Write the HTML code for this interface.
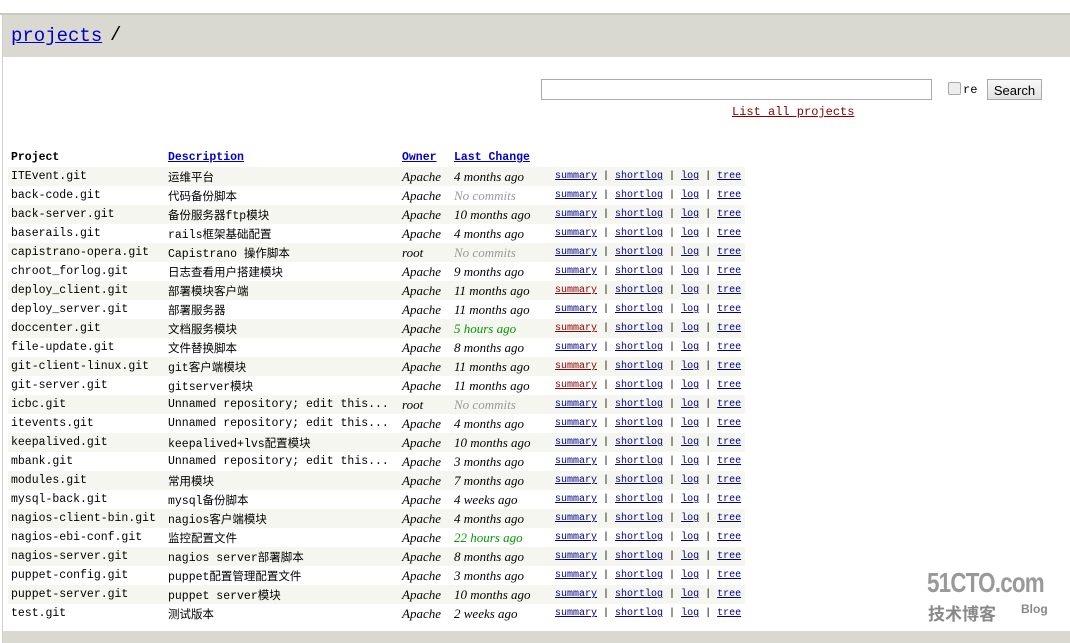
<!DOCTYPE html>
<html><head><meta charset="utf-8"><style>
body{margin:0;width:1070px;height:643px;background:#fff;position:relative;overflow:hidden;font-family:"Liberation Mono","Noto Sans CJK SC",monospace;font-size:11.5px;color:#000}
.top{position:absolute;left:0;top:0;width:1070px;height:13px;background:#fff;border-bottom:2px solid #c8c8c0}
.wrap{position:absolute;left:2px;top:15px;width:1068px;height:628px;border-left:1px solid #d0d0c8;background:#fff}
.hdr{position:absolute;left:0;top:0;width:1068px;height:42px;background:#d9d8d1}
.hdr a{position:absolute;left:8px;top:10px;font-size:19px;color:#0000cc;text-decoration:underline}
.hdr span{position:absolute;left:107px;top:9px;font-size:19px}
.foot{position:absolute;left:0;top:616px;width:1068px;height:12px;background:#d9d8d1}
input.t{position:absolute;left:538px;top:64px;width:389px;height:19px;border:1px solid #aaa;margin:0;padding:0}
.cb{position:absolute;left:945px;top:67px;width:11px;height:11px;border:1px solid #aaa;border-radius:2px;background:#eee}
.re{position:absolute;left:960px;top:68px;font-size:12px}
.btn{position:absolute;left:984px;top:64px;width:55px;height:21px;border:1px solid #aaa;background:linear-gradient(#f8f8f8,#e2e2e2);font-family:"Liberation Sans",sans-serif;font-size:13px;text-align:center;line-height:21px;box-sizing:border-box}
.lap{position:absolute;left:729px;top:90px;color:#880000;text-decoration:underline;font-size:12px}
table{position:absolute;left:5px;top:133px;border-collapse:collapse;table-layout:fixed}
td,th{height:19px;padding:0 0 0 3px;white-space:nowrap;overflow:hidden;text-align:left;vertical-align:middle}
th{font-weight:bold;height:19px}
th a{color:#0000cc;text-decoration:underline}
tr.d td{background:#f6f6f0}
td.o,td.c{font-style:italic;font-family:"Liberation Serif","Liberation Mono",serif;font-size:13px}
.g{color:#999}.n{color:#009900}
td.l{font-size:10px}
td.l a{color:#000088;text-decoration:underline}
td.l a.r{color:#880000}
.logo{position:absolute;left:927px;top:570px;font-family:"Liberation Sans",sans-serif;font-weight:bold;color:#999;font-size:28px;letter-spacing:-1px;line-height:26px;transform:scaleX(0.8);transform-origin:left top}
.logo2{position:absolute;left:928px;top:600px;color:#888;font-size:17px;font-family:"Noto Sans CJK SC",sans-serif;font-weight:bold}
.logo3{position:absolute;left:1021px;top:602px;color:#888;font-size:12px;font-family:"Liberation Sans",sans-serif;font-weight:bold}
</style></head><body>
<div class="top"></div>
<div class="wrap">
<div class="hdr"><a>projects</a><span>/</span></div>
<input class="t" type="text"><div class="cb"></div><div class="re">re</div><div class="btn">Search</div>
<div class="lap">List all projects</div>
<table>
<colgroup><col style="width:157px"><col style="width:234px"><col style="width:52px"><col style="width:101px"><col style="width:193px"></colgroup>
<tr><th>Project</th><th><a>Description</a></th><th><a>Owner</a></th><th><a>Last Change</a></th><th></th></tr>
<tr class="d"><td>ITEvent.git</td><td>运维平台</td><td class="o">Apache</td><td class="c">4 months ago</td><td class="l"><a>summary</a> | <a>shortlog</a> | <a>log</a> | <a>tree</a></td></tr>
<tr><td>back-code.git</td><td>代码备份脚本</td><td class="o">Apache</td><td class="c g">No commits</td><td class="l"><a>summary</a> | <a>shortlog</a> | <a>log</a> | <a>tree</a></td></tr>
<tr class="d"><td>back-server.git</td><td>备份服务器ftp模块</td><td class="o">Apache</td><td class="c">10 months ago</td><td class="l"><a>summary</a> | <a>shortlog</a> | <a>log</a> | <a>tree</a></td></tr>
<tr><td>baserails.git</td><td>rails框架基础配置</td><td class="o">Apache</td><td class="c">4 months ago</td><td class="l"><a>summary</a> | <a>shortlog</a> | <a>log</a> | <a>tree</a></td></tr>
<tr class="d"><td>capistrano-opera.git</td><td>Capistrano 操作脚本</td><td class="o">root</td><td class="c g">No commits</td><td class="l"><a>summary</a> | <a>shortlog</a> | <a>log</a> | <a>tree</a></td></tr>
<tr><td>chroot_forlog.git</td><td>日志查看用户搭建模块</td><td class="o">Apache</td><td class="c">9 months ago</td><td class="l"><a>summary</a> | <a>shortlog</a> | <a>log</a> | <a>tree</a></td></tr>
<tr class="d"><td>deploy_client.git</td><td>部署模块客户端</td><td class="o">Apache</td><td class="c">11 months ago</td><td class="l"><a class="r">summary</a> | <a>shortlog</a> | <a>log</a> | <a>tree</a></td></tr>
<tr><td>deploy_server.git</td><td>部署服务器</td><td class="o">Apache</td><td class="c">11 months ago</td><td class="l"><a>summary</a> | <a>shortlog</a> | <a>log</a> | <a>tree</a></td></tr>
<tr class="d"><td>doccenter.git</td><td>文档服务模块</td><td class="o">Apache</td><td class="c n">5 hours ago</td><td class="l"><a class="r">summary</a> | <a>shortlog</a> | <a>log</a> | <a>tree</a></td></tr>
<tr><td>file-update.git</td><td>文件替换脚本</td><td class="o">Apache</td><td class="c">8 months ago</td><td class="l"><a>summary</a> | <a>shortlog</a> | <a>log</a> | <a>tree</a></td></tr>
<tr class="d"><td>git-client-linux.git</td><td>git客户端模块</td><td class="o">Apache</td><td class="c">11 months ago</td><td class="l"><a class="r">summary</a> | <a>shortlog</a> | <a>log</a> | <a>tree</a></td></tr>
<tr><td>git-server.git</td><td>gitserver模块</td><td class="o">Apache</td><td class="c">11 months ago</td><td class="l"><a class="r">summary</a> | <a>shortlog</a> | <a>log</a> | <a>tree</a></td></tr>
<tr class="d"><td>icbc.git</td><td>Unnamed repository; edit this...</td><td class="o">root</td><td class="c g">No commits</td><td class="l"><a>summary</a> | <a>shortlog</a> | <a>log</a> | <a>tree</a></td></tr>
<tr><td>itevents.git</td><td>Unnamed repository; edit this...</td><td class="o">Apache</td><td class="c">4 months ago</td><td class="l"><a>summary</a> | <a>shortlog</a> | <a>log</a> | <a>tree</a></td></tr>
<tr class="d"><td>keepalived.git</td><td>keepalived+lvs配置模块</td><td class="o">Apache</td><td class="c">10 months ago</td><td class="l"><a>summary</a> | <a>shortlog</a> | <a>log</a> | <a>tree</a></td></tr>
<tr><td>mbank.git</td><td>Unnamed repository; edit this...</td><td class="o">Apache</td><td class="c">3 months ago</td><td class="l"><a>summary</a> | <a>shortlog</a> | <a>log</a> | <a>tree</a></td></tr>
<tr class="d"><td>modules.git</td><td>常用模块</td><td class="o">Apache</td><td class="c">7 months ago</td><td class="l"><a>summary</a> | <a>shortlog</a> | <a>log</a> | <a>tree</a></td></tr>
<tr><td>mysql-back.git</td><td>mysql备份脚本</td><td class="o">Apache</td><td class="c">4 weeks ago</td><td class="l"><a>summary</a> | <a>shortlog</a> | <a>log</a> | <a>tree</a></td></tr>
<tr class="d"><td>nagios-client-bin.git</td><td>nagios客户端模块</td><td class="o">Apache</td><td class="c">4 months ago</td><td class="l"><a>summary</a> | <a>shortlog</a> | <a>log</a> | <a>tree</a></td></tr>
<tr><td>nagios-ebi-conf.git</td><td>监控配置文件</td><td class="o">Apache</td><td class="c n">22 hours ago</td><td class="l"><a>summary</a> | <a>shortlog</a> | <a>log</a> | <a>tree</a></td></tr>
<tr class="d"><td>nagios-server.git</td><td>nagios server部署脚本</td><td class="o">Apache</td><td class="c">8 months ago</td><td class="l"><a>summary</a> | <a>shortlog</a> | <a>log</a> | <a>tree</a></td></tr>
<tr><td>puppet-config.git</td><td>puppet配置管理配置文件</td><td class="o">Apache</td><td class="c">3 months ago</td><td class="l"><a>summary</a> | <a>shortlog</a> | <a>log</a> | <a>tree</a></td></tr>
<tr class="d"><td>puppet-server.git</td><td>puppet server模块</td><td class="o">Apache</td><td class="c">10 months ago</td><td class="l"><a>summary</a> | <a>shortlog</a> | <a>log</a> | <a>tree</a></td></tr>
<tr><td>test.git</td><td>测试版本</td><td class="o">Apache</td><td class="c">2 weeks ago</td><td class="l"><a>summary</a> | <a>shortlog</a> | <a>log</a> | <a>tree</a></td></tr>
</table>
<div class="foot"></div>
</div>
<div class="logo">51CTO.com</div>
<div class="logo2">技术博客</div>
<div class="logo3">Blog</div>
</body></html>
